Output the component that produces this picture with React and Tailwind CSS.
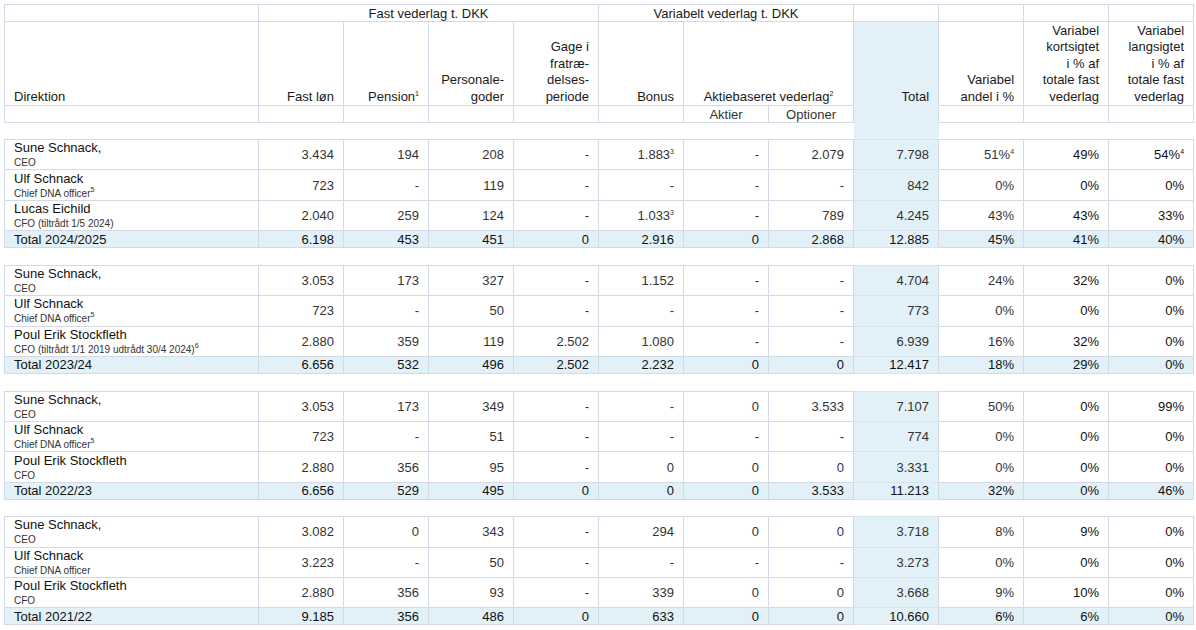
import React from 'react';

const LINE = 'border-[#d3d9e6]';
const BLUE = 'bg-[#e2f0f7]';

// værdier: tekst eller [tekst, fodnote]
const blocks = [
  {
    total: 'Total 2024/2025',
    rows: [
      { name: 'Sune Schnack,', role: 'CEO', v: ['3.434', '194', '208', '-', ['1.883', '3'], '-', '2.079', '7.798', ['51%', '4'], '49%', ['54%', '4']] },
      { name: 'Ulf Schnack', role: ['Chief DNA officer', '5'], v: ['723', '-', '119', '-', '-', '-', '-', '842', '0%', '0%', '0%'] },
      { name: 'Lucas Eichild', role: 'CFO (tiltrådt 1/5 2024)', v: ['2.040', '259', '124', '-', ['1.033', '3'], '-', '789', '4.245', '43%', '43%', '33%'] },
    ],
    sum: ['6.198', '453', '451', '0', '2.916', '0', '2.868', '12.885', '45%', '41%', '40%'],
  },
  {
    total: 'Total 2023/24',
    rows: [
      { name: 'Sune Schnack,', role: 'CEO', v: ['3.053', '173', '327', '-', '1.152', '-', '-', '4.704', '24%', '32%', '0%'] },
      { name: 'Ulf Schnack', role: ['Chief DNA officer', '5'], v: ['723', '-', '50', '-', '-', '-', '-', '773', '0%', '0%', '0%'] },
      { name: 'Poul Erik Stockfleth', role: ['CFO (tiltrådt 1/1 2019 udtrådt 30/4 2024)', '6'], v: ['2.880', '359', '119', '2.502', '1.080', '-', '-', '6.939', '16%', '32%', '0%'] },
    ],
    sum: ['6.656', '532', '496', '2.502', '2.232', '0', '0', '12.417', '18%', '29%', '0%'],
  },
  {
    total: 'Total 2022/23',
    rows: [
      { name: 'Sune Schnack,', role: 'CEO', v: ['3.053', '173', '349', '-', '-', '0', '3.533', '7.107', '50%', '0%', '99%'] },
      { name: 'Ulf Schnack', role: ['Chief DNA officer', '5'], v: ['723', '-', '51', '-', '-', '-', '-', '774', '0%', '0%', '0%'] },
      { name: 'Poul Erik Stockfleth', role: 'CFO', v: ['2.880', '356', '95', '-', '0', '0', '0', '3.331', '0%', '0%', '0%'] },
    ],
    sum: ['6.656', '529', '495', '0', '0', '0', '3.533', '11.213', '32%', '0%', '46%'],
  },
  {
    total: 'Total 2021/22',
    rows: [
      { name: 'Sune Schnack,', role: 'CEO', v: ['3.082', '0', '343', '-', '294', '0', '0', '3.718', '8%', '9%', '0%'] },
      { name: 'Ulf Schnack', role: 'Chief DNA officer', v: ['3.223', '-', '50', '-', '-', '-', '-', '3.273', '0%', '0%', '0%'] },
      { name: 'Poul Erik Stockfleth', role: 'CFO', v: ['2.880', '356', '93', '-', '339', '0', '0', '3.668', '9%', '10%', '0%'] },
    ],
    sum: ['9.185', '356', '486', '0', '633', '0', '0', '10.660', '6%', '6%', '0%'],
  },
];

function Sup({ children }) {
  return <sup className="text-[7px] leading-none relative top-[-5px] align-baseline">{children}</sup>;
}

function Val({ v }) {
  if (Array.isArray(v)) {
    return (
      <>
        {v[0]}
        <Sup>{v[1]}</Sup>
      </>
    );
  }
  return v;
}

function cellCls(i, extra = '') {
  // i = kolonneindeks 0..10 for talkolonner, 7 = Total
  const strong = i >= 9 ? 'text-[#111]' : 'text-[#333]';
  const total = i === 7 ? `${BLUE} border-y-[#d8e5ee]` : '';
  return `border ${LINE} px-[9px] text-right align-middle ${strong} ${total} ${extra}`;
}

function Spacer({ first }) {
  return (
    <tr className={first ? 'h-[17px]' : 'h-[17.6px]'}>
      <td colSpan={8} className="p-0" />
      <td className={`p-0 ${first ? BLUE : ''}`} />
      <td colSpan={3} className="p-0" />
    </tr>
  );
}

export default function App() {
  const hd = `border ${LINE} px-[9px] pb-0 pt-0 align-bottom text-right text-[#1a1a1a] leading-[16.4px]`;
  return (
    <div
      className="w-[1196px] h-[630px] bg-white pt-[4px] pl-[4px] overflow-hidden"
      style={{ fontFamily: '"Liberation Sans", Arial, sans-serif' }}
    >
      <table className="table-fixed border-collapse w-[1189px] text-[13px] leading-[15px]">
        <colgroup>
          <col className="w-[254px]" />
          {Array.from({ length: 11 }).map((_, i) => (
            <col key={i} className="w-[85px]" />
          ))}
        </colgroup>
        <tbody>
          {/* overskrift, række 1 */}
          <tr className="h-[17px]">
            <td className={`border ${LINE} p-0`} />
            <td colSpan={4} className={`border ${LINE} text-center text-[#1a1a1a] p-0`}>Fast vederlag t. DKK</td>
            <td colSpan={3} className={`border ${LINE} text-center text-[#1a1a1a] p-0`}>Variabelt vederlag t. DKK</td>
            <td className={`border ${LINE} p-0`} />
            <td className={`border ${LINE} p-0`} />
            <td className={`border ${LINE} p-0`} />
            <td className={`border ${LINE} p-0`} />
          </tr>
          {/* overskrift, række 2 */}
          <tr className="h-[84px]">
            <td className={`${hd} !text-left`}>Direktion</td>
            <td className={hd}>Fast løn</td>
            <td className={hd}>
              Pension<Sup>1</Sup>
            </td>
            <td className={hd}>
              Personale-
              <br />
              goder
            </td>
            <td className={hd}>
              Gage i<br />
              fratræ-
              <br />
              delses-
              <br />
              periode
            </td>
            <td className={hd}>Bonus</td>
            <td colSpan={2} className={`${hd} !text-center`}>
              Aktiebaseret vederlag<Sup>2</Sup>
            </td>
            <td className={`${hd} ${BLUE} border-b-[#e2f0f7]`}>Total</td>
            <td className={hd}>
              Variabel
              <br />
              andel i %
            </td>
            <td className={hd}>
              Variabel
              <br />
              kortsigtet
              <br />i % af
              <br />
              totale fast
              <br />
              vederlag
            </td>
            <td className={hd}>
              Variabel
              <br />
              langsigtet
              <br />i % af
              <br />
              totale fast
              <br />
              vederlag
            </td>
          </tr>
          {/* overskrift, række 3 */}
          <tr className="h-[17px]">
            {Array.from({ length: 6 }).map((_, i) => (
              <td key={i} className={`border ${LINE} p-0`} />
            ))}
            <td className={`border ${LINE} text-center text-[#333] p-0`}>Aktier</td>
            <td className={`border ${LINE} text-center text-[#333] p-0`}>Optioner</td>
            <td className={`border ${LINE} ${BLUE} border-y-[#e2f0f7] p-0`} />
            <td className={`border ${LINE} p-0`} />
            <td className={`border ${LINE} p-0`} />
            <td className={`border ${LINE} p-0`} />
          </tr>

          {blocks.map((b, bi) => (
            <React.Fragment key={bi}>
              <Spacer first={bi === 0} />
              {b.rows.map((r, ri) => (
                <tr key={ri} className="h-[30.4px]">
                  <td className={`border ${LINE} px-[9px] py-0 align-middle text-left`}>
                    <div className="text-[13px] leading-[16px] text-[#111]">{r.name}</div>
                    <div className="text-[10px] leading-[13px] text-[#333]">
                      <Val v={r.role} />
                    </div>
                  </td>
                  {r.v.map((v, i) => (
                    <td key={i} className={cellCls(i, 'py-0')}>
                      <Val v={v} />
                    </td>
                  ))}
                </tr>
              ))}
              <tr className={`h-[17px] ${BLUE}`}>
                <td className={`border ${LINE} px-[9px] py-0 text-left text-[#111] align-middle`}>{b.total}</td>
                {b.sum.map((v, i) => (
                  <td key={i} className={`${cellCls(i, 'py-0')} !text-[#111]`}>
                    {v}
                  </td>
                ))}
              </tr>
            </React.Fragment>
          ))}
        </tbody>
      </table>
    </div>
  );
}
